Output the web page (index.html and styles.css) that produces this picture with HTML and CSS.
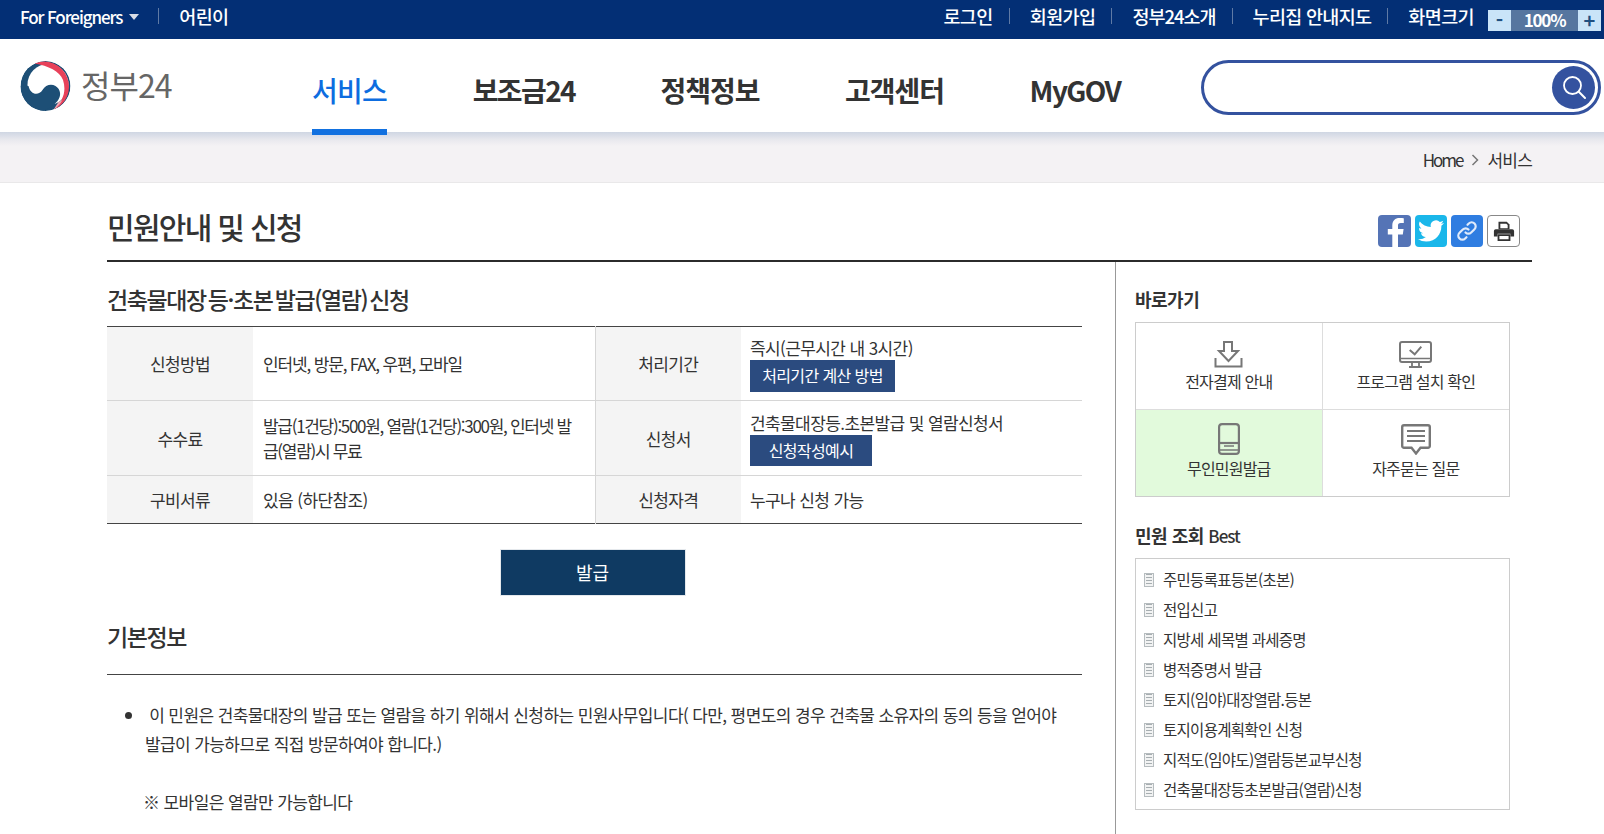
FILE: index.html
```html
<!DOCTYPE html>
<html lang="ko">
<head>
<meta charset="utf-8">
<title>민원안내 및 신청 | 정부24</title>
<link rel="stylesheet" href="styles.css">
</head>
<body>
<div class="topbar">
  <div class="top-left">
    <a class="top-link foreign">For Foreigners<span class="caret"></span></a>
    <a class="top-link kids">어린이</a>
  </div>
  <div class="top-right">
    <a class="top-link sep">로그인</a>
    <a class="top-link sep">회원가입</a>
    <a class="top-link sep narrow">정부24소개</a>
    <a class="top-link sep snug">누리집 안내지도</a>
    <span class="top-link">화면크기</span>
    <div class="zoomer"><span class="zbtn">-</span><span class="zval">100%</span><span class="zbtn">+</span></div>
  </div>
</div>
<header class="header">
  <a class="logo">
    <svg class="logo-mark" viewBox="0 0 100 100" aria-hidden="true">
      <defs><clipPath id="disc"><circle cx="50" cy="50" r="50"/></clipPath></defs>
      <g clip-path="url(#disc)">
        <circle cx="50" cy="50" r="50" fill="#1d4f76"/>
        <circle cx="55" cy="47" r="41" fill="#fff"/>
        <path d="M28 5A50 50 0 0 1 66 97.500C86 80 92 60 85 38 78 20 56 10 28 5Z" fill="#e8415a"/>
        <path d="M66 97.500C74 92 80 86 84 78L76 82Z" fill="#f3a5b0"/>
        <path d="M16 50C20 68 36 70 44 58 50 47 62 45 70 50 81 57 82 70 74 80 66 90 55 96 46 100H0V50Z" fill="#1d4f76"/>
      </g>
    </svg>
    <span class="logo-text">정부24</span>
  </a>
  <nav class="nav">
    <a class="nav-item active">서비스</a>
    <a class="nav-item tight-nav">보조금24</a>
    <a class="nav-item">정책정보</a>
    <a class="nav-item">고객센터</a>
    <a class="nav-item tight-nav">MyGOV</a>
  </nav>
  <form class="search">
    <span class="search-btn">
      <svg viewBox="0 0 28 28" width="28" height="28" aria-hidden="true"><circle cx="12.500" cy="12.500" r="8.500" fill="none" stroke="#fff" stroke-width="1.800"/><path d="M18.800 18.800L25 25" stroke="#fff" stroke-width="2" stroke-linecap="round"/></svg>
    </span>
  </form>
</header>
<div class="crumbs">
  <span class="crumb-home">Home</span>
  <svg class="crumb-arrow" viewBox="0 0 8 12" width="8" height="12" aria-hidden="true"><path d="M1.500 1L6.500 6 1.500 11" fill="none" stroke="#777" stroke-width="1.500"/></svg>
  <span class="crumb-cur">서비스</span>
</div>
<main class="page">
  <div class="title-row">
    <h1 class="page-title">민원안내 및 신청</h1>
    <div class="share">
      <a class="share-btn fb"><svg viewBox="0 0 33 33" width="33" height="33" aria-hidden="true"><path d="M20 33V19.500h4.800l.8-5.500H20v-3.200c0-1.600.5-2.700 2.800-2.700h3V3.200c-.6-.1-2.300-.2-4.300-.2-4.300 0-7.200 2.600-7.200 7.400V14H9.800v5.500h4.500V33Z" fill="#fff"/></svg></a>
      <a class="share-btn tw"><svg viewBox="0 0 24 24" width="26" height="26" aria-hidden="true"><path d="M23.950 4.570a10 10 0 0 1-2.820.77 4.960 4.960 0 0 0 2.160-2.720c-.95.560-2 .960-3.120 1.180a4.920 4.920 0 0 0-8.380 4.480C7.690 8.100 4.070 6.130 1.640 3.160a4.820 4.820 0 0 0-.670 2.480c0 1.710.870 3.210 2.190 4.100a4.900 4.900 0 0 1-2.230-.620v.060a4.920 4.920 0 0 0 3.950 4.830 5 5 0 0 1-2.210.080 4.940 4.940 0 0 0 4.600 3.420A9.870 9.870 0 0 1 0 19.540a14 14 0 0 0 7.560 2.210c9.050 0 14-7.500 14-13.980 0-.210 0-.420-.020-.630a9.940 9.940 0 0 0 2.460-2.550z" fill="#fff"/></svg></a>
      <a class="share-btn ln"><svg viewBox="0 0 24 24" width="24" height="24" aria-hidden="true"><g fill="none" stroke="#dfeafb" stroke-width="2.200" stroke-linecap="round"><path d="M10.500 13.500a4 4 0 0 0 5.700 0l3.300-3.300a4 4 0 0 0-5.700-5.700l-1.300 1.300"/><path d="M13.500 10.500a4 4 0 0 0-5.700 0l-3.300 3.300a4 4 0 0 0 5.700 5.700l1.300-1.300"/></g></svg></a>
      <a class="share-btn pr"><svg viewBox="0 0 24 24" width="22" height="22" aria-hidden="true"><path d="M6 2h9l3 3v5H6Z" fill="#333"/><path d="M8 4h6.500L16 5.500V9H8Z" fill="#fff"/><path d="M3 10h18a2 2 0 0 1 2 2v6h-4v-3H5v3H1v-6a2 2 0 0 1 2-2Z" fill="#333"/><path d="M6 16.500h12V22H6Z" fill="none" stroke="#333" stroke-width="2"/></svg></a>
    </div>
  </div>
  <div class="columns">
    <section class="content">
      <h2 class="section-title">건축물대장 등·초본 발급(열람) 신청</h2>
      <table class="info">
        <colgroup><col class="c-th"><col class="c-td"><col class="c-th2"><col class="c-td2"></colgroup>
        <tr class="r1">
          <th>신청방법</th>
          <td class="divided tight">인터넷, 방문, FAX, 우편, 모바일</td>
          <th>처리기간</th>
          <td class="stack">즉시(근무시간 내 3시간)<a class="mini-btn">처리기간 계산 방법</a></td>
        </tr>
        <tr class="r2">
          <th>수수료</th>
          <td class="divided tighter">발급(1건당):500원, 열람(1건당):300원, 인터넷 발급(열람)시 무료</td>
          <th>신청서</th>
          <td class="stack lower">건축물대장등.초본발급 및 열람신청서<a class="mini-btn wide">신청작성예시</a></td>
        </tr>
        <tr class="r3">
          <th>구비서류</th>
          <td class="divided">있음 (하단참조)</td>
          <th>신청자격</th>
          <td class="plain">누구나 신청 가능</td>
        </tr>
      </table>
      <div class="action"><a class="issue-btn">발급</a></div>
      <h2 class="section-title basic">기본정보</h2>
      <ul class="desc">
        <li>&nbsp;이 민원은 건축물대장의 발급 또는 열람을 하기 위해서 신청하는 민원사무입니다( 다만, 평면도의 경우 건축물 소유자의 동의 등을 얻어야 발급이 가능하므로 직접 방문하여야 합니다.)</li>
      </ul>
      <p class="note">※ 모바일은 열람만 가능합니다</p>
    </section>
    <aside class="side">
      <h3 class="side-title">바로가기</h3>
      <div class="quick">
        <a class="quick-item">
          <svg viewBox="0 0 29 27" width="29" height="27" aria-hidden="true"><g fill="none" stroke="#777" stroke-width="2"><path d="M10 1h8v9h6L14.500 20 5 10h5Z"/><path d="M1.500 17v8.500h26V17"/></g></svg>
          <span>전자결제 안내</span>
        </a>
        <a class="quick-item">
          <svg viewBox="0 0 33 27" width="33" height="27" aria-hidden="true"><g fill="none" stroke="#777"><rect x="1" y="1" width="31" height="20" rx="2" stroke-width="2"/><path d="M1 17.500h31" stroke-width="1.500"/><path d="M10.700 9l5 4.300 6.600-7.600" stroke-width="2"/><path d="M13 21v5M20 21v5M10 26h13" stroke-width="1.800"/></g></svg>
          <span>프로그램 설치 확인</span>
        </a>
        <a class="quick-item green">
          <svg viewBox="0 0 22 32" width="22" height="32" aria-hidden="true"><g fill="none" stroke="#777" stroke-width="2.200"><rect x="1.100" y="1.100" width="19.800" height="29.800" rx="3"/><path d="M1.100 20h19.800"/><path d="M6 23h10M1.100 27h19.800" stroke-width="1.500"/></g></svg>
          <span>무인민원발급</span>
        </a>
        <a class="quick-item">
          <svg viewBox="0 0 30 31" width="30" height="31" aria-hidden="true"><g fill="none" stroke="#777"><path d="M3 1.200h24a1.800 1.800 0 0 1 1.800 1.800v19a1.800 1.800 0 0 1-1.800 1.800h-7.500L15 29.500l-4.500-5.700H3A1.800 1.800 0 0 1 1.200 22V3A1.800 1.800 0 0 1 3 1.200Z" stroke-width="2.400"/><path d="M6 7h18M6 12h18M6 17h18" stroke-width="1.800"/></g></svg>
          <span>자주묻는 질문</span>
        </a>
      </div>
      <h3 class="side-title second">민원 조회 <span class="best">Best</span></h3>
      <ul class="best-list">
        <li>주민등록표등본(초본)</li>
        <li>전입신고</li>
        <li>지방세 세목별 과세증명</li>
        <li>병적증명서 발급</li>
        <li>토지(임야)대장열람.등본</li>
        <li>토지이용계획확인 신청</li>
        <li>지적도(임야도)열람등본교부신청</li>
        <li>건축물대장등초본발급(열람)신청</li>
      </ul>
    </aside>
  </div>
</main>
</body>
</html>
```
FILE: styles.css
```css
* { box-sizing: border-box; }
html, body { margin: 0; padding: 0; height: 834px; overflow: hidden; }
body {
  font-family: "Noto Sans CJK KR", "Noto Sans", sans-serif;
  color: #333;
  background: #fff;
  display: flex;
  flex-direction: column;
}
h1, h2, h3, p, ul { margin: 0; padding: 0; }
a { color: inherit; text-decoration: none; }

/* top bar */
.topbar {
  height: 39px;
  flex: none;
  background: #032f75;
  color: #fff;
  display: flex;
  justify-content: space-between;
  align-items: center;
  padding: 0 3px 8px 20px;
}
.top-left, .top-right { display: flex; align-items: center; }
.top-link { font-size: 18.500px; font-weight: 500; letter-spacing: -0.600px; white-space: nowrap; line-height: 24px; }
.foreign { display: flex; align-items: center; font-size: 17px; letter-spacing: -1.100px; margin-top: 2px; }
.caret {
  width: 0; height: 0;
  margin-left: 7px;
  border: 5px solid transparent;
  border-top: 6px solid #d9dde6;
  border-bottom: 0;
}
.kids { margin-left: 19px; padding-left: 20px; border-left: 1px solid #5f7aa5; line-height: 16px; }
.top-right .sep { border-right: 1px solid #5f7aa5; line-height: 16px; padding-right: 16px; margin-right: 20px; }
.top-right .narrow { letter-spacing: -1px; }
.top-right .snug { letter-spacing: -0.700px; }
.zoomer {
  display: flex;
  margin: 10px 0 0 14px;
  height: 21px;
  width: 113px;
  background: #56769f;
}
.zbtn {
  width: 23px;
  background: #c9e4f8;
  color: #1f4f80;
  font-size: 20px;
  font-weight: 700;
  line-height: 20px;
  text-align: center;
}
.zval { flex: 1; text-align: center; font-size: 17px; font-weight: 700; letter-spacing: -1.200px; line-height: 20px; }

/* header */
.header {
  height: 93px;
  flex: none;
  display: flex;
  align-items: center;
  padding-right: 3px;
  position: relative;
  z-index: 1;
}
.logo { display: flex; align-items: center; margin-left: 20px; width: 292px; }
.logo-mark { width: 51px; height: 50px; }
.logo-text { margin: -3px 0 0 10px; font-size: 32px; font-weight: 400; color: #666; letter-spacing: -1px; line-height: 40px; }
.nav { display: flex; align-self: stretch; gap: 85.500px; }
.nav-item {
  height: 96px;
  padding-top: 31px;
  font-size: 28px;
  font-weight: 700;
  letter-spacing: -1px;
  line-height: 40px;
  color: #333;
  white-space: nowrap;
}
.nav-item.tight-nav { letter-spacing: -1.600px; }
.nav-item.active { color: #0d6de0; font-weight: 500; letter-spacing: -0.700px; border-bottom: 6px solid #1271e0; }
.search {
  margin: 3px 0 0 auto;
  width: 400px;
  height: 55px;
  border: 3px solid #34529f;
  border-radius: 28px;
  display: flex;
  justify-content: flex-end;
  align-items: center;
  padding-right: 3px;
  background: #fff;
}
.search-btn {
  width: 43px; height: 43px;
  border-radius: 50%;
  background: #34529f;
  display: flex;
  align-items: center;
  justify-content: center;
}

/* breadcrumb */
.crumbs {
  height: 51px;
  flex: none;
  background: linear-gradient(#cfd6e3 0, #e9e9ee 8px, #f4f2f4 14px);
  border-bottom: 1px solid #e9e8e9;
  display: flex;
  align-items: center;
  justify-content: flex-end;
  gap: 8px;
  padding: 5px 72px 0 0;
  font-size: 17px;
  letter-spacing: -1px;
  color: #333;
}
.crumb-home { letter-spacing: -2px; margin-right: 1px; }
.crumb-cur { letter-spacing: -0.800px; }
.crumb-arrow { flex: none; }

/* page */
.page { flex: 1; min-height: 0; display: flex; flex-direction: column; padding: 0 72px 0 107px; }
.title-row {
  height: 79px;
  flex: none;
  border-bottom: 2px solid #2b2b2b;
  display: flex;
  justify-content: space-between;
  align-items: flex-start;
}
.page-title { margin-top: 22px; font-size: 30px; font-weight: 500; letter-spacing: -1.700px; line-height: 42px; color: #333; }
.share { display: flex; gap: 4px; margin: 32px 12px 0 0; }
.share-btn { width: 32px; height: 32px; border-radius: 4px; display: flex; align-items: center; justify-content: center; overflow: hidden; }
.fb { background: #5574b6; width: 33px; }
.tw { background: #1ab7ea; }
.ln { background: #2f7de1; }
.pr { background: #fff; border: 1px solid #888; width: 33px; }

.columns { flex: 1; min-height: 0; display: flex; }
.content { width: 975px; flex: none; }
.section-title { font-size: 23px; font-weight: 500; letter-spacing: -1.400px; word-spacing: -3px; line-height: 32px; margin-top: 21px; height: 43px; color: #333; }

.info { width: 975px; table-layout: fixed; border-collapse: collapse; border-top: 1px solid #444; border-bottom: 1px solid #444; font-size: 17px; letter-spacing: -0.600px; }
.c-th { width: 146px; }
.c-td { width: 342px; }
.c-th2 { width: 146px; }
.c-td2 { width: 341px; }
.r1 { height: 74px; }
.r2 { height: 75px; }
.r3 { height: 48px; }
.info tr + tr th, .info tr + tr td { border-top: 1px solid #d6d6d6; }
.info th { background: #f4f4f4; font-weight: 400; text-align: center; padding: 0; color: #333; }
.info td { padding: 0 9px 0 10px; line-height: 25px; color: #333; }
.info .divided { border-right: 1px solid #d6d6d6; padding-right: 14px; }
.info .tight { letter-spacing: -1.150px; }
.info .tighter { letter-spacing: -1.300px; }
.info .plain { padding-left: 9px; }
.info .stack { vertical-align: top; padding-top: 8px; padding-left: 9px; white-space: nowrap; }
.info .stack.lower { padding-top: 9px; }
.mini-btn {
  display: block;
  width: 145px;
  height: 32px;
  background: #2b4b7f;
  color: #fff;
  font-size: 16px;
  text-align: center;
  line-height: 31px;
}
.mini-btn.wide { width: 122px; height: 31px; }

.action { margin-top: 25px; display: flex; justify-content: center; width: 971px; }
.issue-btn { width: 186px; height: 47px; background: #0f3a62; border: 1px solid #e4e8ec; color: #fff; text-align: center; font-size: 18px; line-height: 44px; }
.section-title.basic { margin-top: 24px; height: 54px; line-height: 32px; }
.desc {
  border-top: 1px solid #444;
  padding: 25px 22px 0 38px;
  font-size: 17px;
  letter-spacing: -0.600px;
  line-height: 29px;
}
.note { padding-left: 36px; margin-top: 29px; font-size: 17px; letter-spacing: -0.600px; line-height: 29px; }

.side { flex: 1; margin-left: 33px; border-left: 1px solid #999; padding: 0 22px 0 19px; }
.side-title { font-size: 18px; font-weight: 700; letter-spacing: -0.500px; line-height: 26px; margin-top: 24px; height: 36px; color: #333; }
.quick {
  display: grid;
  grid-template-columns: 1fr 1fr;
  grid-template-rows: 87px 86px;
  border: 1px solid #ccc;
}
.quick-item { display: flex; flex-direction: column; align-items: center; justify-content: flex-end; padding-bottom: 17px; gap: 2px; font-size: 16px; letter-spacing: -0.800px; line-height: 22px; color: #333; }
.quick-item:nth-child(odd) { border-right: 1px solid #ddd; }
.quick-item:nth-child(-n+2) { border-bottom: 1px solid #ddd; }
.green { background: #e2fadc; }
.side-title.second { margin-top: 25px; height: 36px; }
.best { font-size: 17px; font-weight: 500; letter-spacing: -1px; }
.best-list { list-style: none; border: 1px solid #ccc; padding: 5px 8px 3px; height: 252px; font-size: 15.500px; letter-spacing: -0.700px; }
.best-list li {
  height: 30px;
  line-height: 30px;
  padding-left: 19px;
  background:
    linear-gradient(#a7aeb1, #a7aeb1) 2px 10px / 6px 1px no-repeat,
    linear-gradient(#a7aeb1, #a7aeb1) 2px 13px / 6px 1px no-repeat,
    linear-gradient(#a7aeb1, #a7aeb1) 2px 16px / 6px 1px no-repeat,
    linear-gradient(#a7aeb1, #a7aeb1) 2px 19px / 6px 1px no-repeat,
    linear-gradient(#f2f3f3, #f2f3f3) 1px 10px / 8px 12px no-repeat,
    linear-gradient(#b6bcbf, #b6bcbf) 0 9px / 10px 14px no-repeat;
}
```
